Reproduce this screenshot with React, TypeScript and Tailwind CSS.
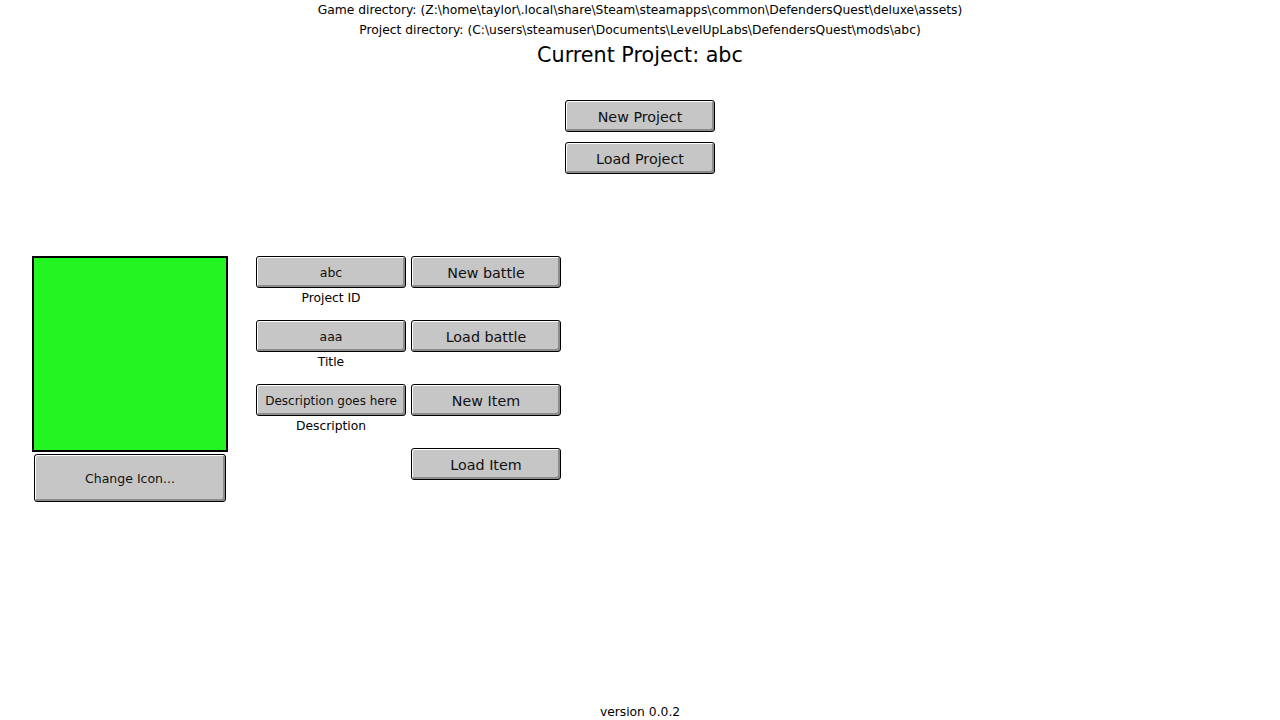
import React from "react";

const btn =
  "flex items-center justify-center pt-[2px] border border-black rounded-[3px] bg-[#c6c6c6] text-[#111] shadow-[inset_1px_1px_0_#ffffff,inset_-2px_-2px_0_#8c8c8c]";

function Button({ label, className = "" }: { label: string; className?: string }) {
  return <div className={`${btn} ${className}`}>{label}</div>;
}

function Field({ value, label, small }: { value: string; label: string; small?: boolean }) {
  return (
    <div className="flex flex-col items-center w-[150px]">
      <Button label={value} className={`w-[150px] h-[32px] ${small ? "text-[12px]" : "text-[12.5px]"}`} />
      <div className="text-[12.3px] leading-[18px] mt-[1px]">{label}</div>
    </div>
  );
}

export default function App() {
  const rows = [
    { field: { value: "abc", label: "Project ID" }, action: "New battle" },
    { field: { value: "aaa", label: "Title" }, action: "Load battle" },
    { field: { value: "Description goes here", label: "Description", small: true }, action: "New Item" },
    { field: null, action: "Load Item" },
  ];

  return (
    <div
      className="h-[720px] w-[1280px] bg-white text-black flex flex-col"
      style={{ fontFamily: '"DejaVu Sans", Verdana, sans-serif' }}
    >
      <div className="flex flex-col items-center">
        <div className="text-[12.3px] leading-[20px]">
          Game directory: (Z:\home\taylor\.local\share\Steam\steamapps\common\DefendersQuest\deluxe\assets)
        </div>
        <div className="text-[12.3px] leading-[20px]">
          Project directory: (C:\users\steamuser\Documents\LevelUpLabs\DefendersQuest\mods\abc)
        </div>
        <div className="text-[20.7px] leading-[30px]">Current Project: abc</div>
        <div className="mt-[30px] flex flex-col gap-[10px]">
          <Button label="New Project" className="w-[150px] h-[32px] text-[14.3px] pt-[4px]" />
          <Button label="Load Project" className="w-[150px] h-[32px] text-[14.3px] pt-[4px]" />
        </div>
      </div>

      <div className="flex mt-[82px] pl-[32px]">
        <div className="flex flex-col items-center w-[196px]">
          <div className="w-[196px] h-[196px] bg-[#22f522] border-2 border-black" />
          <Button label="Change Icon..." className="mt-[2px] w-[192px] h-[48px] text-[12.5px]" />
        </div>
        <div className="ml-[28px] flex flex-col">
          {rows.map((r, i) => (
            <div key={i} className="flex gap-[5px] h-[64px]">
              {r.field ? <Field {...r.field} /> : <div className="w-[150px]" />}
              <Button label={r.action} className="w-[150px] h-[32px] text-[14.3px] pt-[4px]" />
            </div>
          ))}
        </div>
      </div>

      <div className="mt-auto text-center text-[12.3px] leading-[16px]">version 0.0.2</div>
    </div>
  );
}
